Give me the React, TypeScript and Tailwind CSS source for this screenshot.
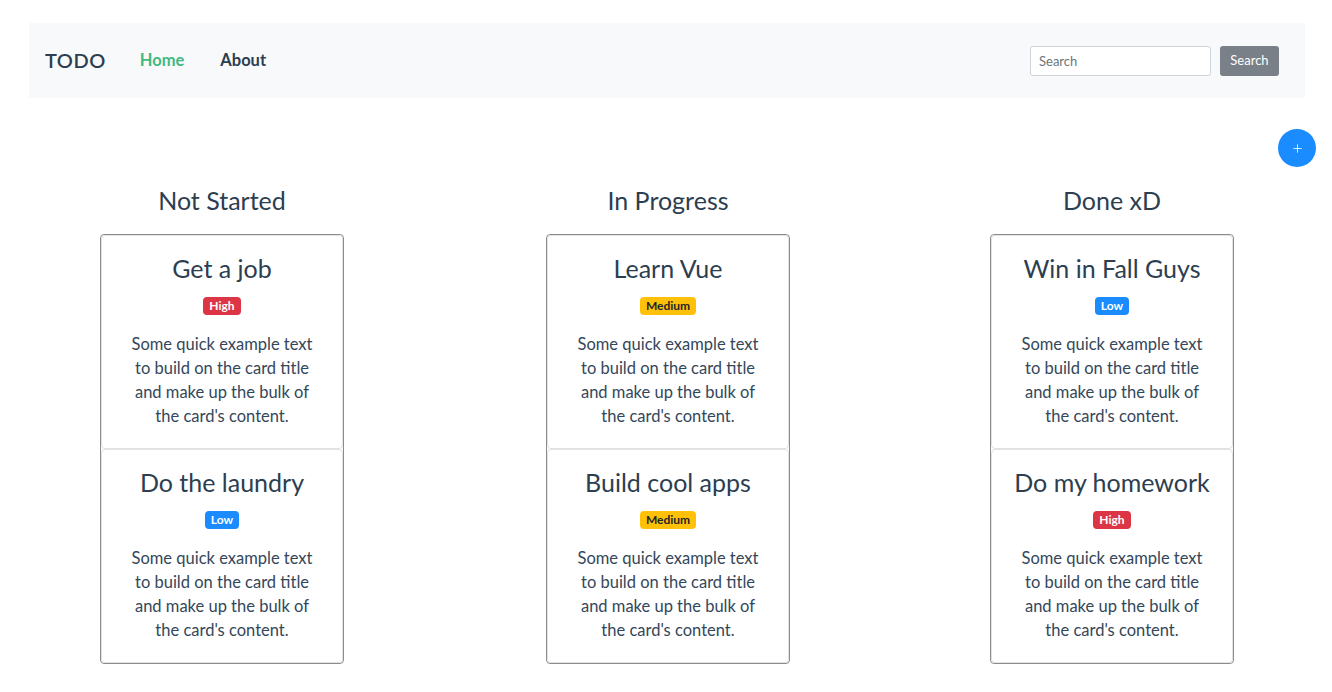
import { Plus } from "lucide-react";

type Task = { title: string; priority: "High" | "Medium" | "Low" };

const columns: { name: string; tasks: Task[] }[] = [
  {
    name: "Not Started",
    tasks: [
      { title: "Get a job", priority: "High" },
      { title: "Do the laundry", priority: "Low" },
    ],
  },
  {
    name: "In Progress",
    tasks: [
      { title: "Learn Vue", priority: "Medium" },
      { title: "Build cool apps", priority: "Medium" },
    ],
  },
  {
    name: "Done xD",
    tasks: [
      { title: "Win in Fall Guys", priority: "Low" },
      { title: "Do my homework", priority: "High" },
    ],
  },
];

const badgeClass = {
  High: "bg-[#dc3545] text-white",
  Medium: "bg-[#ffc107] text-[#212529]",
  Low: "bg-[#1a8cff] text-white",
};

const TaskCard = ({ task }: { task: Task }) => (
  <div className="border border-[#e2e2e2] rounded-[4px] px-5 pt-[18px] pb-5 text-center">
    <h4 className="text-[25px] leading-[29px] mb-[14px]">{task.title}</h4>
    <div className="flex justify-center">
      <span
        className={`text-[12px] leading-[12px] font-bold px-[6px] py-[3px] rounded-[4px] ${badgeClass[task.priority]}`}
      >
        {task.priority}
      </span>
    </div>
    <p className="text-[16.5px] leading-6 mt-[17px] text-[#34475a]">
      Some quick example text to build on the card title and make up the bulk of the card's content.
    </p>
  </div>
);

export default function App() {
  return (
    <div
      className="min-h-screen bg-white text-[#2c3e50] overflow-hidden"
      style={{ fontFamily: "Lato, 'Open Sans', sans-serif" }}
    >
      <nav className="mt-[23px] ml-[29px] mr-[27px] h-[75px] bg-[#f8f9fa] flex items-center pl-4 pr-[26px]">
        <span className="text-[20px] font-semibold tracking-[0.5px] mr-[34px] -mt-[2px]">TODO</span>
        <a className="text-[16.5px] font-bold text-[#42b983] mr-[36px]">Home</a>
        <a className="text-[16.5px] font-bold">About</a>
        <div className="ml-auto flex items-center gap-[9px]">
          <input
            placeholder="Search"
            className="w-[181px] h-[30px] border border-[#ced4da] rounded-[3px] bg-white px-2 text-[13px] placeholder:text-[#6c757d]"
          />
          <button className="w-[59px] h-[30px] bg-[#7a8088] text-white text-[13px] rounded-[3px]">
            Search
          </button>
        </div>
      </nav>

      <div className="flex justify-end mt-[31px] mr-[16px]">
        <button className="w-[38px] h-[38px] rounded-full bg-[#1a8cff] text-white flex items-center justify-center">
          <Plus size={13} strokeWidth={1.5} />
        </button>
      </div>

      <div className="grid grid-cols-[444px_448px_440px] mt-[18px]">
        {columns.map((col) => (
          <div key={col.name} className="flex flex-col items-center">
            <h3 className="text-[25px] leading-[30px] mb-[19px]">{col.name}</h3>
            <div className="w-[244px] border border-[#8c8c8c] rounded-[4px]">
              {col.tasks.map((t) => (
                <TaskCard key={t.title} task={t} />
              ))}
            </div>
          </div>
        ))}
      </div>
    </div>
  );
}
